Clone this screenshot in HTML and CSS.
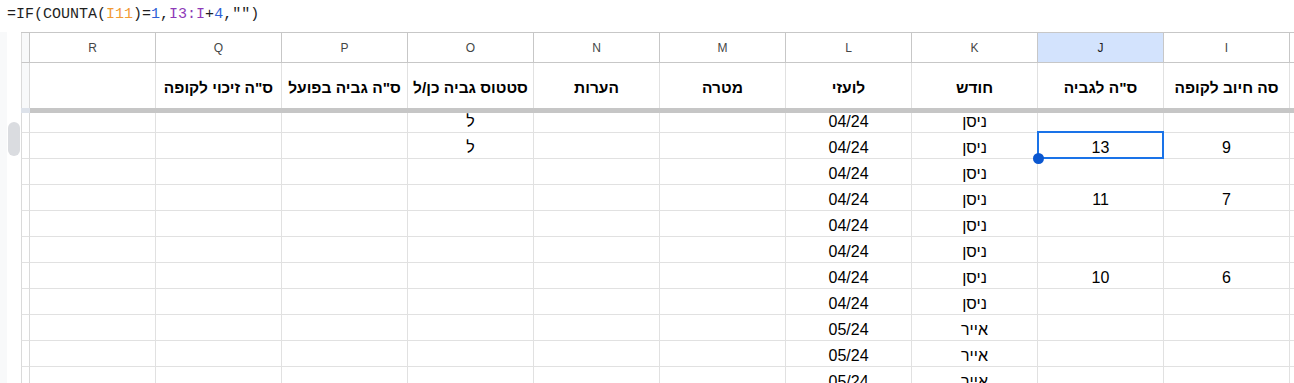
FILE: index.html
```html
<!DOCTYPE html>
<html lang="he">
<head>
<meta charset="utf-8">
<title>Sheet</title>
<link rel="stylesheet" href="styles.css">
</head>
<body>
<div class="formula" dir="ltr"><span class="fx">=IF(COUNTA(</span><span class="ref1">I11</span><span class="fx">)=</span><span class="num">1</span><span class="fx">,</span><span class="ref2">I3:I</span><span class="fx">+</span><span class="num">4</span><span class="fx">,"")</span></div>
<div class="main">
  <div class="rail">
    <div class="strip"></div>
    <div class="track"><div class="thumb"></div></div>
  </div>
  <div class="sheet">
    <div class="row colhead">
      <div class="c filler"></div>
      <div class="c">I</div><div class="c sel">J</div><div class="c">K</div><div class="c">L</div><div class="c">M</div>
      <div class="c">N</div><div class="c">O</div><div class="c">P</div><div class="c">Q</div><div class="c">R</div>
      <div class="c narrow"></div>
    </div>
    <div class="row head">
      <div class="c filler"></div>
      <div class="c">סה חיוב לקופה</div><div class="c">ס"ה לגביה</div><div class="c">חודש</div><div class="c">לועזי</div><div class="c">מטרה</div>
      <div class="c">הערות</div><div class="c">סטטוס גביה כן/ל</div><div class="c">ס"ה גביה בפועל</div><div class="c">ס"ה זיכוי לקופה</div><div class="c"></div>
      <div class="c narrow"></div>
    </div>
    <div class="divider"><div class="dv-fill"></div><div class="dv-narrow"></div></div>
    <div class="row data first">
      <div class="c filler"></div>
      <div class="c"></div><div class="c"></div><div class="c">ניסן</div><div class="c">04/24</div><div class="c"></div>
      <div class="c"></div><div class="c">ל</div><div class="c"></div><div class="c"></div><div class="c"></div>
      <div class="c narrow"></div>
    </div>
    <div class="row data">
      <div class="c filler"></div>
      <div class="c">9</div><div class="c active">13</div><div class="c">ניסן</div><div class="c">04/24</div><div class="c"></div>
      <div class="c"></div><div class="c">ל</div><div class="c"></div><div class="c"></div><div class="c"></div>
      <div class="c narrow"></div>
    </div>
    <div class="row data">
      <div class="c filler"></div>
      <div class="c"></div><div class="c"></div><div class="c">ניסן</div><div class="c">04/24</div><div class="c"></div>
      <div class="c"></div><div class="c"></div><div class="c"></div><div class="c"></div><div class="c"></div>
      <div class="c narrow"></div>
    </div>
    <div class="row data">
      <div class="c filler"></div>
      <div class="c">7</div><div class="c">11</div><div class="c">ניסן</div><div class="c">04/24</div><div class="c"></div>
      <div class="c"></div><div class="c"></div><div class="c"></div><div class="c"></div><div class="c"></div>
      <div class="c narrow"></div>
    </div>
    <div class="row data">
      <div class="c filler"></div>
      <div class="c"></div><div class="c"></div><div class="c">ניסן</div><div class="c">04/24</div><div class="c"></div>
      <div class="c"></div><div class="c"></div><div class="c"></div><div class="c"></div><div class="c"></div>
      <div class="c narrow"></div>
    </div>
    <div class="row data">
      <div class="c filler"></div>
      <div class="c"></div><div class="c"></div><div class="c">ניסן</div><div class="c">04/24</div><div class="c"></div>
      <div class="c"></div><div class="c"></div><div class="c"></div><div class="c"></div><div class="c"></div>
      <div class="c narrow"></div>
    </div>
    <div class="row data">
      <div class="c filler"></div>
      <div class="c">6</div><div class="c">10</div><div class="c">ניסן</div><div class="c">04/24</div><div class="c"></div>
      <div class="c"></div><div class="c"></div><div class="c"></div><div class="c"></div><div class="c"></div>
      <div class="c narrow"></div>
    </div>
    <div class="row data">
      <div class="c filler"></div>
      <div class="c"></div><div class="c"></div><div class="c">ניסן</div><div class="c">04/24</div><div class="c"></div>
      <div class="c"></div><div class="c"></div><div class="c"></div><div class="c"></div><div class="c"></div>
      <div class="c narrow"></div>
    </div>
    <div class="row data">
      <div class="c filler"></div>
      <div class="c"></div><div class="c"></div><div class="c">אייר</div><div class="c">05/24</div><div class="c"></div>
      <div class="c"></div><div class="c"></div><div class="c"></div><div class="c"></div><div class="c"></div>
      <div class="c narrow"></div>
    </div>
    <div class="row data">
      <div class="c filler"></div>
      <div class="c"></div><div class="c"></div><div class="c">אייר</div><div class="c">05/24</div><div class="c"></div>
      <div class="c"></div><div class="c"></div><div class="c"></div><div class="c"></div><div class="c"></div>
      <div class="c narrow"></div>
    </div>
    <div class="row data">
      <div class="c filler"></div>
      <div class="c"></div><div class="c"></div><div class="c">אייר</div><div class="c">05/24</div><div class="c"></div>
      <div class="c"></div><div class="c"></div><div class="c"></div><div class="c"></div><div class="c"></div>
      <div class="c narrow"></div>
    </div>
  </div>
</div>
</body>
</html>
```
FILE: styles.css
```css
* { box-sizing: border-box; }
html, body { margin: 0; padding: 0; background: #fff; }
body {
  width: 1294px;
  height: 383px;
  overflow: hidden;
  font-family: "Liberation Sans", Arial, sans-serif;
  color: #000;
}
.formula {
  height: 32px;
  padding-left: 7px;
  padding-top: 5px;
  font-family: "Liberation Mono", "DejaVu Sans Mono", monospace;
  font-size: 15px;
  line-height: 20px;
  color: #1f1f1f;
  white-space: pre;
}
.ref1 { color: #f29b34; }
.ref2 { color: #8e3ab8; }
.num { color: #2f5fd6; }

.main {
  display: flex;
  height: 351px;
}
.rail {
  display: flex;
  width: 21px;
  flex: none;
}
.strip {
  width: 7px;
  background: #f8f9fa;
}
.track {
  width: 14px;
  padding-top: 90px;
  padding-left: 1px;
}
.thumb {
  width: 12px;
  height: 34px;
  border-radius: 6px;
  background: #dadce0;
}
.sheet {
  flex: 1;
  direction: rtl;
  border-top: 1px solid #c7c7c7;
  overflow: hidden;
}
.row {
  display: grid;
  grid-template-columns: 1fr repeat(10, 126px) 9px;
}
.c {
  border-right: 1px solid #e1e1e1;
  border-bottom: 1px solid #e1e1e1;
  display: flex;
  justify-content: center;
  white-space: nowrap;
  overflow: visible;
  position: relative;
}
.c.filler { border-right: none; }
.c.narrow {
  border-left: 1px solid #dadada;
  border-right: 1px solid #dadada;
  background: #fff;
}

.colhead .c {
  height: 30px;
  align-items: center;
  font-size: 12px;
  color: #444746;
  border-right-color: #c7c7c7;
  border-bottom-color: #c7c7c7;
}
.colhead .c.filler { border-right: none; }
.colhead .c.narrow, .head .c.narrow { background: #f8f9fa; }
.colhead .c.sel {
  background: #d3e3fd;
  color: #1f1f1f;
}

.head .c {
  height: 45px;
  border-bottom: none;
  align-items: center;
  padding-top: 5px;
  font-size: 15.5px;
  line-height: 18px;
  font-weight: bold;
}

.divider {
  display: grid;
  grid-template-columns: 1fr 9px;
  height: 5px;
}
.dv-fill { background: #c6c6c6; }
.dv-narrow { background: #dde2ea; }

.data .c {
  height: 26px;
  align-items: flex-end;
  padding-bottom: 1px;
  font-size: 16px;
  line-height: 18px;
}
.data.first .c { height: 20px; }

.c.active::after {
  content: "";
  position: absolute;
  top: -2px;
  left: -1px;
  right: -1px;
  bottom: -1px;
  border: 2px solid #1a73e8;
  z-index: 2;
}
.c.active::before {
  content: "";
  position: absolute;
  left: -5px;
  bottom: -6px;
  width: 11px;
  height: 11px;
  border-radius: 50%;
  background: #0b57d0;
  z-index: 3;
}
```
